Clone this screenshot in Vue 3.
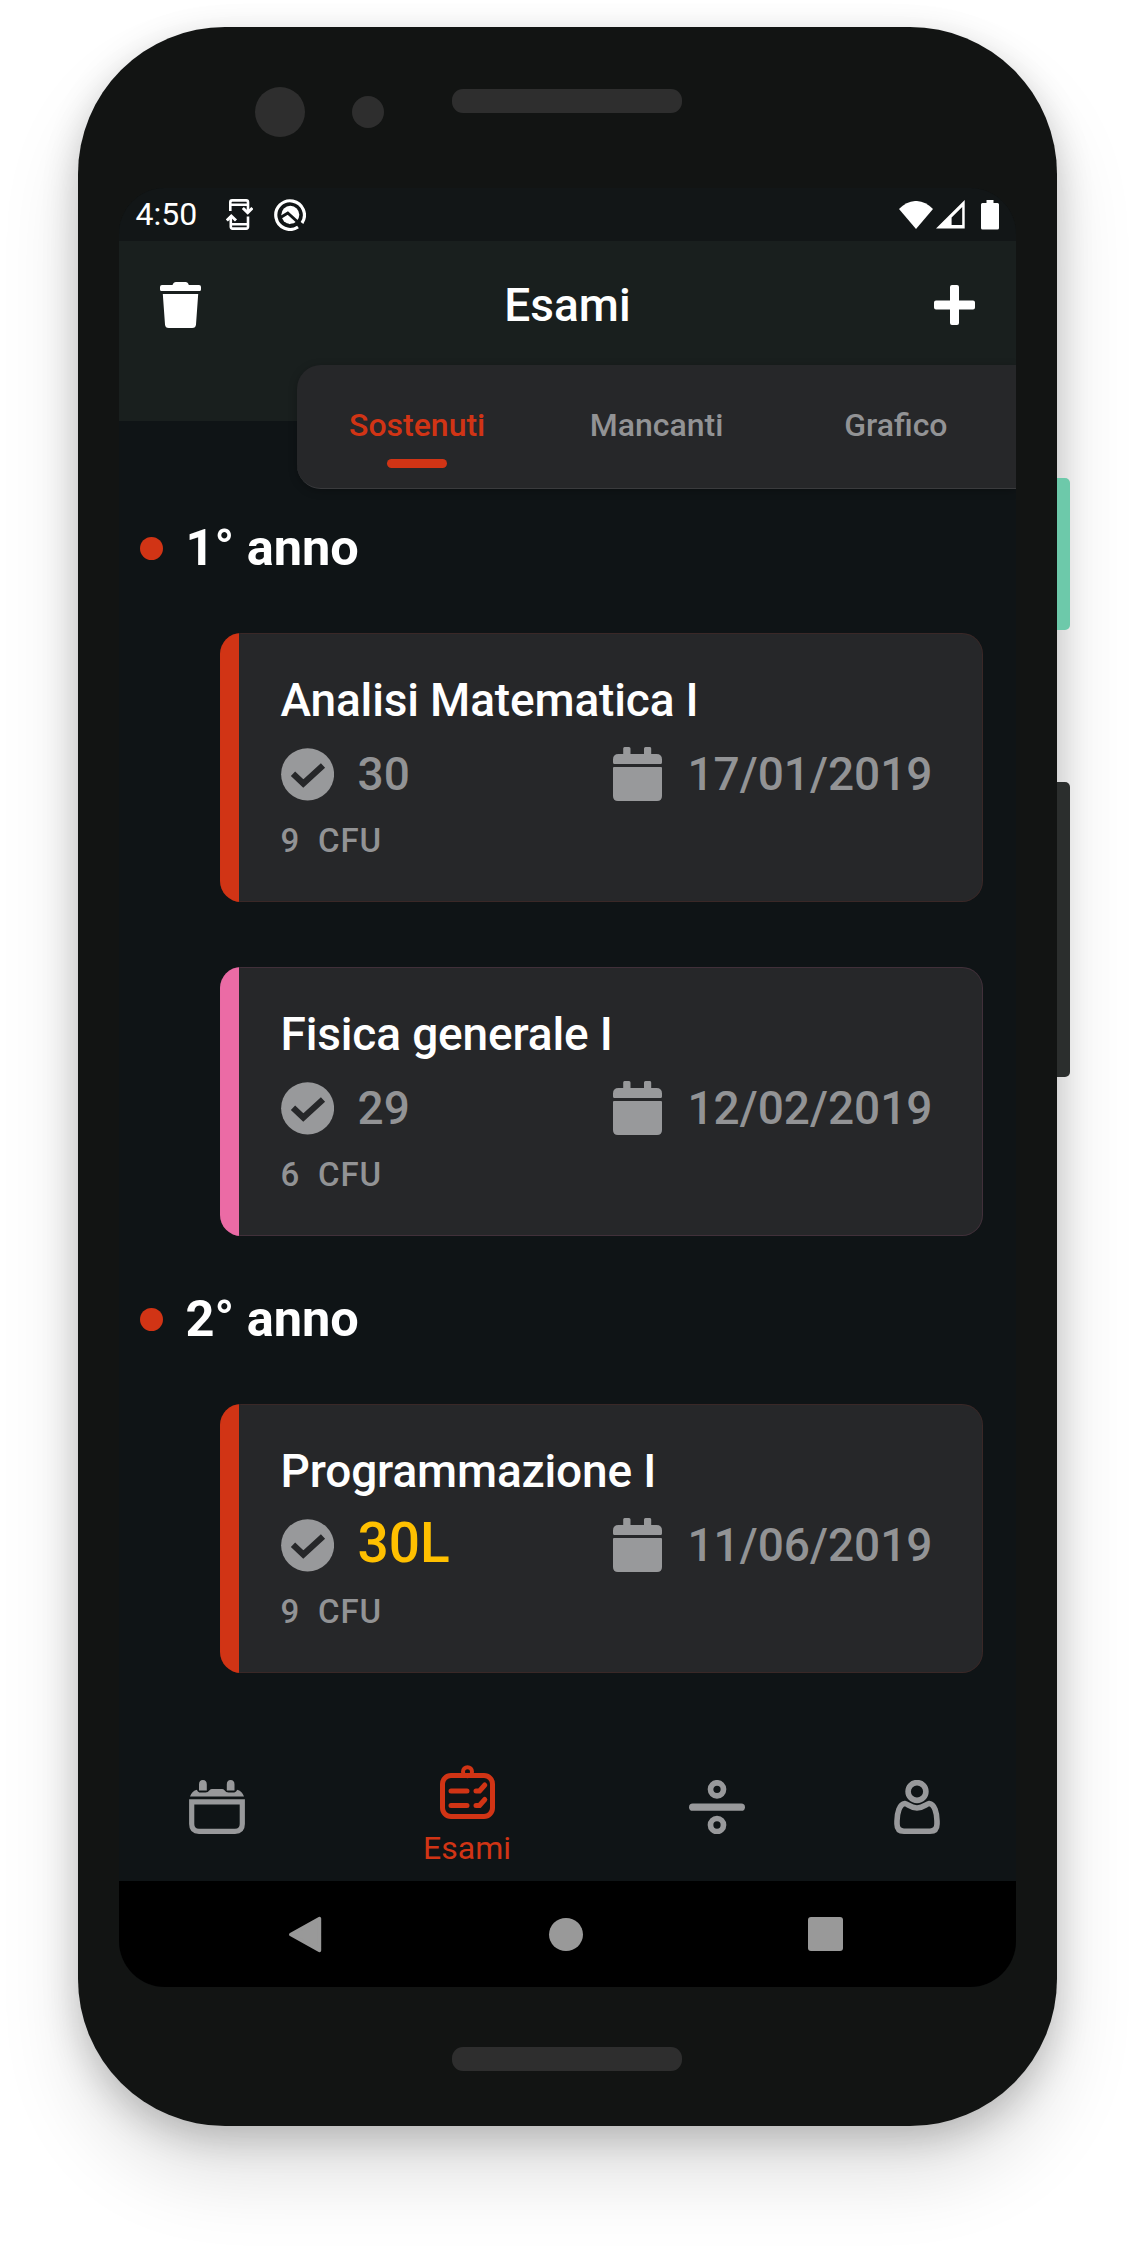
<script setup>
const tabs = [
  { label: 'Sostenuti', active: true },
  { label: 'Mancanti' },
  { label: 'Grafico' },
]

const years = [
  {
    label: '1° anno',
    exams: [
      { name: 'Analisi Matematica I', grade: '30', date: '17/01/2019', cfu: 9, tone: 'red' },
      { name: 'Fisica generale I', grade: '29', date: '12/02/2019', cfu: 6, tone: 'pink' },
    ],
  },
  {
    label: '2° anno',
    exams: [
      { name: 'Programmazione I', grade: '30L', date: '11/06/2019', cfu: 9, tone: 'red', honours: true },
    ],
  },
]
</script>

<template>
  <div class="page">
    <div class="phone">
      <div class="side-button power"></div>
      <div class="side-button volume"></div>
      <div class="bezel-top">
        <span class="lens large"></span>
        <span class="lens small"></span>
        <span class="speaker"></span>
      </div>

      <div class="screen">
        <div class="status">
          <span class="time">4:50</span>
          <svg class="s-update" width="27" height="31" viewBox="0 0 27 31" fill="none" stroke="#fff" stroke-width="2.6">
            <path d="M4.3 12V3.2Q4.3 1.4 6.1 1.4H20.2Q22 1.4 22 3.2V13M4.3 5.8H22M4.8 17V27.8Q4.8 29.6 6.6 29.6H20.2Q22 29.6 22 27.8V17.5M4.8 25.2H22" />
            <path d="M16.8 9L21.7 13.6L26.4 9M.8 21.5L5.3 17L10 21.5" stroke-width="3" />
          </svg>
          <svg class="s-badge" width="32" height="32" viewBox="0 0 32 32" fill="none">
            <path d="M24 28A14.3 14.3 0 1 1 28 24" stroke="#fff" stroke-width="3.2" />
            <circle cx="16.3" cy="15.8" r="9" fill="#fff" />
            <path d="M6.500 18.500L13.800 14L27 26" stroke="#121617" stroke-width="3" />
            <path d="M11 18.500L16.800 24" stroke="#fff" stroke-width="3.600" />
          </svg>
          <span class="grow"></span>
          <svg width="34" height="28" viewBox="0 0 34 28"><path d="M0 8C10-2.7 24-2.7 34 8L17 28Z" fill="#fff" /></svg>
          <svg class="s-signal" width="29" height="29" viewBox="0 0 29 29"><path fill-rule="evenodd" d="M0 28.5L28.7 0V28.5ZM15.6 17.5V25H26.2V7Z" fill="#fff" /></svg>
          <svg width="18" height="30" viewBox="0 0 18 30"><path d="M5.5 0H12.5V3H16.5Q18 3 18 4.5V28Q18 29.5 16.5 29.5H1.5Q0 29.5 0 28V4.5Q0 3 1.5 3H5.5Z" fill="#fff" /></svg>
        </div>

        <header class="header">
          <div class="title-bar">
            <svg width="41" height="46" viewBox="0 0 41 46" fill="#fff">
              <path d="M2 3H12.5Q13.5 0 16 0H25.5Q28 0 28.8 3H39Q41 3 41 5V7.5Q41 9 39.5 9H1.5Q0 9 0 7.5V5Q0 3 2 3ZM2.8 12H38.2L36 42.5Q35.7 46 32.2 46H8.8Q5.3 46 5 42.5Z" />
            </svg>
            <h1>Esami</h1>
            <svg width="41" height="40" viewBox="0 0 41 40" fill="#fff">
              <path d="M18 0H23Q25 0 25 2V15.5H39Q41 15.5 41 17.5V22.5Q41 24.5 39 24.5H25V38Q25 40 23 40H18Q16 40 16 38V24.5H2Q0 24.5 0 22.5V17.5Q0 15.5 2 15.5H16V2Q16 0 18 0Z" />
            </svg>
          </div>
        </header>
        <nav class="tabs">
          <div v-for="t in tabs" :key="t.label" class="tab" :class="{ active: t.active }">
            <span>{{ t.label }}</span>
            <i></i>
          </div>
        </nav>

        <main class="list">
          <section v-for="y in years" :key="y.label">
            <h2><span class="dot"></span>{{ y.label }}</h2>
            <article v-for="e in y.exams" :key="e.name" class="card" :class="e.tone">
              <h3>{{ e.name }}</h3>
              <div class="row">
                <svg width="53" height="53" viewBox="0 0 53 53">
                  <ellipse cx="26.6" cy="26.3" rx="26.5" ry="26.1" fill="#98999b" />
                  <path d="M12 25.7L22.3 35.6L42 17.5" fill="none" stroke="#262729" stroke-width="6.2" stroke-linejoin="miter" />
                </svg>
                <span class="grade" :class="{ honours: e.honours }">{{ e.grade }}</span>
                <svg width="49" height="54" viewBox="0 0 49 54" fill="#98999b">
                  <path d="M11.5 0H16Q17.5 0 17.5 1.5V7H31V1.5Q31 0 32.5 0H37Q38.2 0 38.2 1.5V7H43.5Q49 7 49 12.5V15.5Q49 17 47.5 17H1.5Q0 17 0 15.5V12.5Q0 7 5.5 7H10.2V1.5Q10.2 0 11.5 0ZM1 20H48Q49 20 49 21V49Q49 54 44 54H5Q0 54 0 49V21Q0 20 1 20Z" />
                </svg>
                <span class="date">{{ e.date }}</span>
              </div>
              <div class="cfu">{{ e.cfu }}&nbsp; CFU</div>
            </article>
          </section>
        </main>

        <nav class="bottom-nav">
          <div class="item">
            <svg width="56" height="54" viewBox="0 0 56 54" fill="#98999b">
              <path d="M10 10.5V4.5Q10 0 13.9 0Q17.8 0 17.8 4.5V10.5ZM37.8 10.5V4.5Q37.8 0 41.6 0Q45.5 0 45.5 4.5V10.5Z" />
              <path d="M1 16.5Q3 11 8 9.8Q8.5 12.6 12 12.6H16.5Q19 12.6 20.5 10.2Q21.5 9 23 9H33Q34.5 9 35.5 10.2Q37 12.6 39.5 12.6H43.5Q47.5 12.6 48 9.8Q53 11 55 16.5Z" />
              <path d="M2.7 21.8H53.3V44Q53.3 51.3 46 51.3H10Q2.7 51.3 2.7 44Z" fill="none" stroke="#98999b" stroke-width="5.2" />
            </svg>
          </div>
          <div class="item active">
            <svg width="55" height="54" viewBox="0 0 55 54" fill="none" stroke="#d13415" stroke-width="5" stroke-linecap="round" stroke-linejoin="round">
              <rect x="2.5" y="10.5" width="50" height="41" rx="8.5" />
              <circle cx="27.5" cy="6.7" r="4.5" stroke-width="4" />
              <path d="M11 26H27M11 40.5H27" />
              <path d="M36 26H39.5L44.8 20M36 40.5H39.5L44.8 34.5" />
            </svg>
            <span>Esami</span>
          </div>
          <div class="item">
            <svg width="56" height="54" viewBox="0 0 56 54" fill="none" stroke="#98999b" stroke-width="5.7">
              <circle cx="28" cy="9.3" r="6.5" />
              <circle cx="28" cy="45" r="6.5" />
              <path d="M3.7 27.2H52.3" stroke-width="7.3" stroke-linecap="round" />
            </svg>
          </div>
          <div class="item">
            <svg width="46" height="54" viewBox="0 0 46 54" fill="none" stroke="#98999b" stroke-width="5.6">
              <circle cx="23" cy="11.5" r="8.9" />
              <path d="M10.8 23.5C5.5 24 3 33 3 41V44Q3 51.2 10 51.2H36Q43 51.2 43 44V41C43 33 40.5 24 35.2 23.5C32 24 29.5 28 23 28C16.5 28 14 24 10.8 23.5Z" />
            </svg>
          </div>
        </nav>

        <div class="system-nav">
          <svg width="33" height="37" viewBox="0 0 33 37"><path d="M1.8 18.5L30.5 2.5V34.5Z" fill="#999" stroke="#999" stroke-width="3.4" stroke-linejoin="round" /></svg>
          <span class="home"></span>
          <span class="recent"></span>
        </div>
      </div>

      <span class="speaker bottom"></span>
    </div>
  </div>
</template>

<style>
body {
  margin: 0;
  background: #fff;
}
</style>

<style scoped>
.page {
  box-sizing: border-box;
  width: 1134px;
  height: 2253px;
  padding: 27px 77px 0 78px;
  overflow: hidden;
  background: #fff;
  font-family: Roboto, 'Liberation Sans', sans-serif;
}
.page svg {
  display: block;
  flex: none;
}
h1,
h2,
h3 {
  margin: 0;
}
.phone {
  position: relative;
  display: flex;
  flex-direction: column;
  align-items: center;
  box-sizing: border-box;
  width: 979px;
  height: 2099px;
  border-radius: 147px;
  background: #121413;
  box-shadow: 0 48px 80px rgba(0, 0, 0, 0.13), 0 12px 36px rgba(0, 0, 0, 0.2);
}
.side-button {
  position: absolute;
  left: 979px;
  width: 13px;
  border-radius: 0 5px 5px 0;
}
.power {
  top: 451px;
  height: 152px;
  background: #6dc9aa;
}
.volume {
  top: 755px;
  height: 295px;
  background: #2b2e2d;
}
.bezel-top {
  display: flex;
  align-items: center;
  align-self: stretch;
  height: 161px;
  padding-left: 177px;
}
.lens {
  border-radius: 50%;
  background: #2e2e2e;
}
.lens.large {
  width: 50px;
  height: 50px;
  margin-top: 8px;
}
.lens.small {
  width: 32px;
  height: 32px;
  margin: 8px 68px 0 47px;
}
.speaker {
  width: 230px;
  height: 24px;
  margin-bottom: 13px;
  border-radius: 11px;
  background: #2e2e2e;
}
.speaker.bottom {
  margin: 60px 1px 0 0;
}
.screen {
  display: flex;
  flex-direction: column;
  width: 897px;
  height: 1799px;
  margin-right: 1px;
  border-radius: 46px;
  overflow: hidden;
  background: #0f1416;
}
.status {
  display: flex;
  align-items: center;
  box-sizing: border-box;
  height: 53px;
  padding: 0 17px;
  background: #121617;
}
.time {
  width: 90px;
  font-size: 32px;
  line-height: 53px;
}
.time,
h1,
h2,
h3 {
  color: #fff;
}
.s-badge {
  margin-left: 21px;
}
.grow {
  flex: 1;
}
.s-signal {
  margin: 0 16px 0 3px;
}
.header {
  height: 180px;
  background: #191f1e;
}
.title-bar {
  display: flex;
  align-items: center;
  justify-content: space-between;
  height: 127px;
  padding: 0 40px 0 41px;
}
h1 {
  font-size: 46px;
  font-weight: 500;
  line-height: 60px;
}
.tabs {
  position: relative;
  display: flex;
  box-sizing: border-box;
  width: 719px;
  height: 124px;
  margin: -56px 0 0 178px;
  padding-left: 1px;
  border-bottom: 1px solid #3a3b3d;
  border-radius: 24px 0 0 24px;
  background: #262729;
  box-shadow: 0 2px 8px rgba(0, 0, 0, 0.25);
}
.tab {
  display: flex;
  flex: 1;
  flex-direction: column;
  align-items: center;
  padding-top: 40px;
  color: #929395;
  font-size: 32px;
  font-weight: 500;
  line-height: 40px;
}
.tab i {
  width: 60px;
  height: 9px;
  margin-top: 14px;
  border-radius: 5px;
}
.tab.active {
  color: #d13415;
}
.tab.active i {
  background: #d13415;
}
.list {
  flex: 1;
  padding: 29px 33px 0 21px;
}
h2 {
  display: flex;
  align-items: center;
  gap: 23px;
  height: 60px;
  margin-bottom: 55px;
  font-size: 50.5px;
  font-weight: 700;
  line-height: 60px;
}
.dot {
  width: 23px;
  height: 23px;
  border-radius: 50%;
  background: #d13415;
}
.card {
  box-sizing: border-box;
  height: 269px;
  margin: 0 0 65px 80px;
  padding: 37px 50px 0 61px;
  border-radius: 21px;
  background: linear-gradient(90deg, var(--tone) 19px, #262729 19px);
  box-shadow: inset 0 0 0 1px var(--edge);
}
section .card:last-child {
  margin-bottom: 53px;
}
.red {
  --tone: #d13415;
  --edge: rgba(209, 52, 21, 0.12);
}
.pink {
  --tone: #eb6ba5;
  --edge: rgba(232, 105, 164, 0.14);
}
h3 {
  font-size: 46px;
  font-weight: 500;
  line-height: 60px;
  letter-spacing: -0.15px;
}
.row {
  display: flex;
  align-items: center;
  height: 54px;
  margin-top: 17px;
  color: #929395;
  font-size: 46px;
  font-weight: 500;
  line-height: 54px;
}
.grade {
  flex: 1;
  margin-left: 24px;
}
.grade.honours {
  margin-bottom: 5px;
  color: #ffc000;
  font-size: 55px;
}
.date {
  margin-left: 25px;
}
.cfu {
  margin-top: 20px;
  color: #929395;
  font-size: 33px;
  font-weight: 500;
  line-height: 40px;
  letter-spacing: 0.8px;
}
.bottom-nav {
  display: grid;
  grid-template-columns: 196px 305px 195px 204px;
  align-items: start;
  height: 130px;
}
.item {
  display: flex;
  flex-direction: column;
  align-items: center;
  padding-top: 29px;
  color: #d13415;
  font-size: 32px;
  line-height: 40px;
}
.item.active {
  padding-top: 14px;
}
.item span {
  margin-top: 9px;
}
.system-nav {
  display: flex;
  align-items: center;
  box-sizing: border-box;
  height: 106px;
  padding: 0 173px 0 170px;
  justify-content: space-between;
  background: #000;
}
.home {
  width: 34px;
  height: 33px;
  margin-left: 3px;
  border-radius: 50%;
  background: #999;
}
.recent {
  width: 35px;
  height: 34px;
  border-radius: 3px;
  background: #999;
}
</style>
